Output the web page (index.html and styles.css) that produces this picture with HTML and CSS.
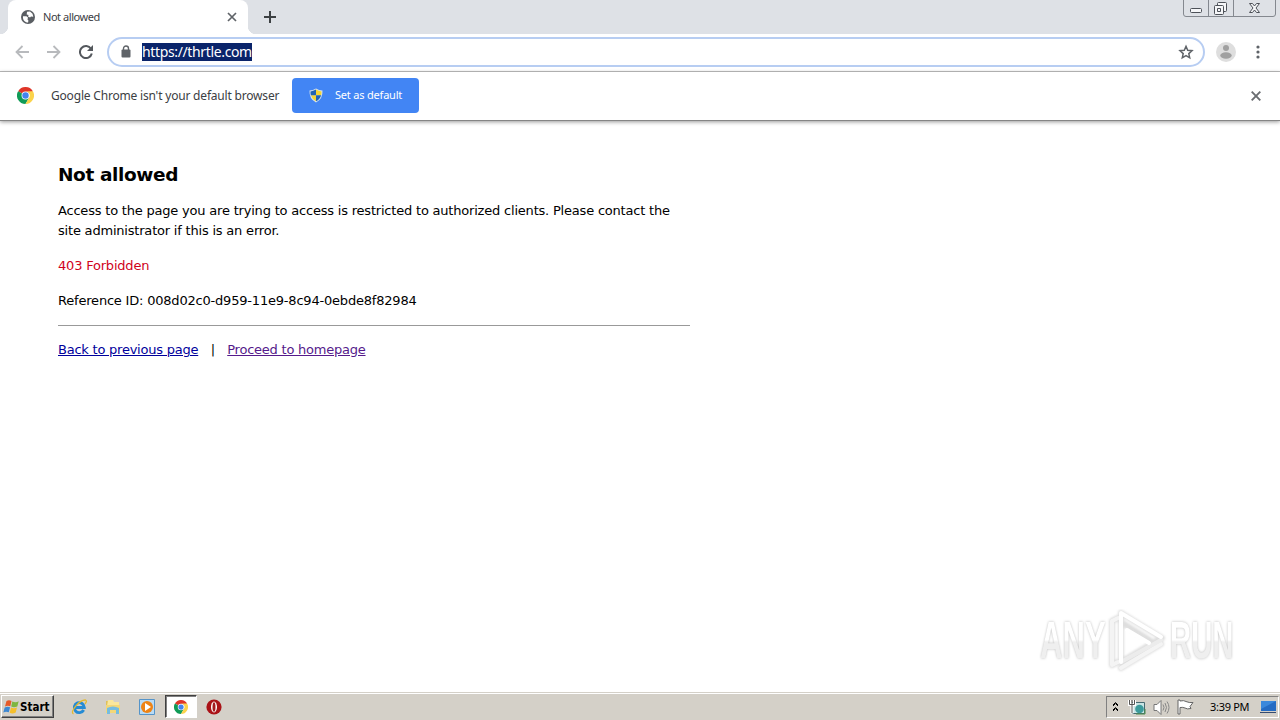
FILE: index.html
```html
<!DOCTYPE html>
<html lang="en">
<head>
<meta charset="utf-8">
<title>Not allowed</title>
<link rel="stylesheet" href="styles.css">
</head>
<body>
<svg width="0" height="0" class="defs">
  <symbol id="chrome" viewBox="0 0 16 16">
    <path d="M8 8 1.070 4A8 8 0 0 1 14.930 4Z" fill="#df3528"/>
    <path d="M8 8 1.070 4A8 8 0 0 0 8 16L11.400 10Z" fill="#109b57"/>
    <path d="M8 4h6.930A8 8 0 0 1 8 16L11.400 10A4 4 0 0 0 8 4Z" fill="#fbd34b"/>
    <circle cx="8" cy="8" r="3.700" fill="#fff"/><circle cx="8" cy="8" r="3" fill="#4384ee"/>
  </symbol>
</svg>
<div class="screen">
  <header class="tabstrip">
    <div class="tab">
      <svg class="globe" width="14" height="14" viewBox="0 0 14 14"><circle cx="7" cy="7" r="7" fill="#5a5e63"/><path d="M2 6.200h3.500l1.600 1.500-.7 1.600 1 1.200-.3 2C4 12.500 1.500 10 2 6.200ZM6 1.700l3-.2 2.500 2.300.8 3-2.300-.4-1 1.100-2-.9.6-1.500-1.900-.7Z" fill="#fff"/></svg>
      <span class="tab-title">Not allowed</span>
      <svg class="tab-close" width="10" height="10" viewBox="0 0 10 10"><path d="m1 1 8 8M9 1 1 9" stroke="#5f6368" stroke-width="1.700"/></svg>
    </div>
    <svg class="plus" width="12" height="12" viewBox="0 0 12 12"><path d="M6 0v12M0 6h12" stroke="#3c4043" stroke-width="2"/></svg>
    <svg class="winbtns" width="95" height="18" viewBox="0 0 95 18"><path d="M.5 0v14q0 2.500 2.500 2.500h87q2.500 0 2.500-2.500V0M25.500 0v16M50.500 0v16" fill="none" stroke="#84888f"/><g fill="#f5f6f8" stroke="#4d5158"><rect x="7.500" y="8.500" width="11" height="4" rx="1"/><rect x="34.500" y="2.500" width="9" height="9" rx="1"/><rect x="31.500" y="5.500" width="9" height="9" rx="1"/><path d="M34.500 8.500h3v3h-3z"/><path d="M66.500 3.500h3l2 2.500 2-2.500h3l-3.500 4.500 3.500 4.500h-3l-2-2.500-2 2.500h-3L70 8Z"/></g></svg>
  </header>
  <nav class="toolbar">
    <svg width="14" height="14" viewBox="0 0 14 14" class="back"><path d="M14 7H1.500M7.500 1l-6 6 6 6" fill="none" stroke="#b8babd" stroke-width="1.800"/></svg>
    <svg width="14" height="14" viewBox="0 0 14 14" class="fwd"><path d="M0 7h12.500M6.500 1l6 6-6 6" fill="none" stroke="#b8babd" stroke-width="1.800"/></svg>
    <svg width="14" height="14" viewBox="0 0 14 14" class="reload"><path d="M12 3.800A6 6 0 1 0 12.800 8.500" fill="none" stroke="#54585d" stroke-width="2"/><path d="M14 0v6H8Z" fill="#54585d"/></svg>
    <div class="omnibox">
      <svg class="lock" width="10" height="13" viewBox="0 0 10 13"><path d="M2.500 5V3.500a2.500 2.500 0 0 1 5 0V5" fill="none" stroke="#5f6368" stroke-width="1.400"/><rect x=".5" y="4.500" width="9" height="8" rx="1" fill="#5f6368"/></svg>
      <span class="url">https://thrtle.com</span>
      <svg class="star" width="16" height="16" viewBox="0 0 16 16"><path d="m8 2.300 1.700 4 4.300.4-3.200 2.900.9 4.200L8 11.600l-3.700 2.200.9-4.200L2 6.700l4.300-.4Z" fill="none" stroke="#5f6368" stroke-width="1.500"/></svg>
    </div>
    <svg class="avatar" width="20" height="20" viewBox="0 0 20 20"><circle cx="10" cy="10" r="10" fill="#dedede"/><circle cx="10" cy="6" r="3" fill="#a0a0a0"/><ellipse cx="10" cy="13.500" rx="5.700" ry="3.200" fill="#a0a0a0"/></svg>
    <svg class="dots" width="4" height="14" viewBox="0 0 4 14" fill="#5f6368"><circle cx="2" cy="2" r="1.600"/><circle cx="2" cy="7" r="1.600"/><circle cx="2" cy="12" r="1.600"/></svg>
  </nav>
  <section class="infobar">
    <svg class="logo" width="17" height="17"><use href="#chrome"/></svg>
    <span class="info-text">Google Chrome isn't your default browser</span>
    <div class="default-btn">
      <svg width="14" height="15" viewBox="0 0 14 15"><path d="M7 .5Q10 2.500 13.500 2.500 14 11 7 14.500 0 11 .5 2.500 4 2.500 7 .5Z" fill="#d5e3ef"/><path d="M7 1.600Q9.500 3.300 12.500 3.400 12.500 5.500 12.100 7.300H7ZM7 7.300V13.300Q3 11 1.900 7.300Z" fill="#f5d534"/><path d="M7 1.600Q4 3.300 1.500 3.400 1.400 5.500 1.900 7.300H7ZM7 7.300h5.100Q11 11.300 7 13.300Z" fill="#2163b5"/></svg>
      <span class="btn-text">Set as default</span>
    </div>
    <svg class="info-close" width="10" height="10" viewBox="0 0 10 10"><path d="m.7.700 8.600 8.600M9.300.700.700 9.300" stroke="#6a6d71" stroke-width="1.900"/></svg>
  </section>
  <main class="page">
    <div class="content">
      <h1>Not allowed</h1>
      <p><span>Access to the page you are trying to access is restricted to authorized clients. Please contact the</span><br><span>site administrator if this is an error.</span></p>
      <p class="error">403 Forbidden</p>
      <p>Reference ID: 008d02c0-d959-11e9-8c94-0ebde8f82984</p>
      <hr>
      <div class="links"><a class="prev">Back to previous page</a><span class="bar">|</span><a class="home">Proceed to homepage</a></div>
    </div>
    <div class="watermark">
      <span class="wm any">ANY</span>
      <svg width="60" height="64" viewBox="0 0 60 64"><g fill="none" stroke-linejoin="round" stroke-linecap="round"><g class="wm-shadow" stroke="#dedede" stroke-width="6"><path d="M11 9 5 12V56l6-3M14 59 54 35"/><path d="M14 53V4L55 29M14 53 54 29M14 13 44 32"/></g><path d="M11 9 5 12V56l6-3M14 59 54 35" stroke="#f4f4f4" stroke-width="4"/><path d="M14 53 54 31" stroke="#ececec" stroke-width="4"/><path d="M14 53V4L54 28M20 21 42 34" stroke="#fff" stroke-width="4"/></g></svg>
      <span class="wm run">RUN</span>
    </div>
  </main>
  <footer class="taskbar">
    <div class="start">
      <svg width="17" height="16" viewBox="0 0 17 16"><path d="M3.500 2Q6 .5 8.500 2L7.300 7.200Q4.500 6 2 7.500Z" fill="#e65a28"/><path d="M9.300 2.400Q12.500 4 15.700 2.300L14.300 7.500Q11 9 8.200 7.600Z" fill="#7eb640"/><path d="M1.700 8.400Q4.500 7 7.100 8.200L5.800 13.300Q3 12 .3 13.500Z" fill="#3d88d2"/><path d="M8 8.600Q11 10 14 8.500L12.700 13.500Q9.500 15.500 6.700 13.800Z" fill="#f5bf2c"/></svg>
      <span class="start-text">Start</span>
    </div>
    <svg class="ie" width="17" height="16" viewBox="0 0 17 16"><path d="M12.700 11A5 5 0 1 1 13.300 8.500H4" fill="none" stroke="#258bd4" stroke-width="2.900"/><path d="M2.500 15C-2 13 9 .5 14.500 1q2 .8-.5 4" fill="none" stroke="#e4b92f" stroke-width="1.300"/></svg>
    <svg class="folder" width="16" height="16" viewBox="0 0 16 16"><path d="M1 2h5l1 2h7v10H1Z" fill="#dfc05a"/><path d="M3 1h5l1 2h5v4H2Z" fill="#fae79b"/><path d="M1 6h14v8H1Z" fill="#f3d777"/><path d="M2 15V9q6-3 12 0v6h-3v-4H5v4Z" fill="#75bce0"/></svg>
    <svg class="media" width="16" height="16" viewBox="0 0 16 16"><path d="M.5.500h15v15H.5Z" fill="#b9dbf5" stroke="#5594c9"/><circle cx="8" cy="8" r="6" fill="#ee8315"/><path d="m6 4 6 4-6 4Z" fill="#fff"/></svg>
    <div class="task"><svg width="14" height="14"><use href="#chrome"/></svg></div>
    <svg class="opera" width="16" height="16" viewBox="0 0 16 16"><circle cx="8" cy="8" r="7.600" fill="#aa1217"/><ellipse cx="8" cy="8" rx="3" ry="5.400" fill="#fff"/><ellipse cx="8" cy="8" rx="1.500" ry="4.700" fill="#a3191d"/></svg>
    <div class="tray">
      <svg class="tray-icons" width="90" height="20" viewBox="0 0 90 20"><path d="m6 8 2.500-2.500L11 8M6 13l2.500-2.500L11 13M6 9l2.500-2.500L11 9M6 14l2.500-2.500L11 14" fill="none" stroke="#000"/>
      <path d="M25.500 5.500h12v11h-12Z" fill="#c9e5e5" stroke="#476a72"/><circle cx="32.500" cy="12" r="4.300" fill="#3c9b9c"/><path d="M22.500 3v4.500h5V3M25 7.500v9" fill="none" stroke="#fff" stroke-width="3"/><path d="M22.500 3v4.500h5V3M25 3v13" fill="none" stroke="#555"/><path d="M29 17h9v-5" stroke="#4d8d4c" fill="none"/>
      <path d="M47 7.500h3l4-4v14l-4-4h-3Z" fill="#fff" stroke="#777"/><path d="M56 7.500q2 3 0 6M58 6q3 4.500 0 9M60 4.500q4 6 0 12" fill="none" stroke="#888"/>
      <path d="M71 17V3h2v1q4-1 6 .5 3 1.500 7 1l-3 4 1 2q-4 1-6-.5-2-1-5-.5V17Z" fill="#fff" stroke="#666"/></svg>
      <span class="clock">3:39 PM</span>
      <svg class="desktop" width="17" height="16" viewBox="0 0 17 16"><path d="M1 2h15v10H1Z" fill="#246bc3"/><path d="M1 2h15L1 10Z" fill="#3b88db"/><path d="M0 13h16v1H0Z" fill="#344b70"/></svg>
    </div>
  </footer>
</div>
</body>
</html>
```
FILE: styles.css
```css
*{box-sizing:border-box}
body{margin:0;background:#fff;font-family:"DejaVu Sans Condensed","DejaVu Sans",sans-serif;color:#000}
svg{display:block;flex:none}
span,a{white-space:nowrap}
.defs{position:absolute}
.screen{width:1280px;height:720px;display:flex;flex-direction:column;overflow:hidden}
.tabstrip{height:34px;background:#dee1e6;display:flex;align-items:flex-start;flex:none}
.tab{width:240px;height:34px;margin-left:8px;background:#fff;border-radius:8px 8px 0 0;display:flex;align-items:center;padding:0 11px 0 13px;position:relative}
.tab::before,.tab::after{content:"";position:absolute;bottom:0;width:8px;height:8px}
.tab::before{left:-8px;background:radial-gradient(circle at 0 0,#dee1e6 8px,#fff 8.500px)}
.tab::after{right:-8px;background:radial-gradient(circle at 100% 0,#dee1e6 8px,#fff 8.500px)}
.tab-title{margin-left:8px;font-family:"Noto Sans",sans-serif;font-size:11px;line-height:16px;letter-spacing:-.45px;color:#3c4043;padding-bottom:1px}
.tab-close{margin-left:auto}
.plus{margin:11px 0 0 16px}
.winbtns{margin-left:auto;margin-right:2px}
.toolbar{height:38px;border-bottom:1px solid #b6b6b6;display:flex;align-items:center;padding:0 20px 2px 15px;flex:none}
.fwd{margin-left:18px}
.reload{margin-left:18px}
.omnibox{margin-left:14px;width:1098px;height:30px;border:2px solid #b7cdf2;border-radius:15px;display:flex;align-items:center;padding:0 9px 0 12px}
.url{margin-left:11px;background:#0a246a;color:#fff;font-family:"Noto Sans",sans-serif;font-size:14px;line-height:18px;height:18px;letter-spacing:-.36px}
.star{margin-left:auto}
.avatar{margin-left:11px}
.dots{margin-left:auto}
.infobar{height:49px;border-bottom:1px solid #858585;display:flex;align-items:center;padding:0 19px 1px 17px;box-shadow:0 1px 4px #999;flex:none}
.info-text{margin-left:17px;width:241px;padding-bottom:1px;font-family:"Noto Sans",sans-serif;font-size:12px;letter-spacing:-.19px;color:#3c4043}
.default-btn{width:127px;height:35px;border-radius:4px;background:#4285f4;display:flex;align-items:center;padding-left:17px;gap:12px;color:#fff;font-family:"Noto Sans",sans-serif;font-size:11px;letter-spacing:-.2px}
.btn-text{padding-bottom:2px}
.info-close{margin-left:auto}
.page{flex:1;display:flex;justify-content:space-between;align-items:flex-end;padding-right:46px}
.content{align-self:flex-start;width:632px;margin-left:58px;padding-top:41px;font-family:"DejaVu Sans",sans-serif;font-size:13px;line-height:20px;letter-spacing:-.2px}
h1{margin:0 0 14px;font-size:18.500px;line-height:25px;letter-spacing:-.38px}
p{margin:0 0 15px;height:20px}
p:nth-of-type(1){height:40px}
.error{color:#d0021b}
hr{height:1px;border:0;background:#999;margin:-1px 0 14px}
.links{display:flex}
a{text-decoration:underline;letter-spacing:-.23px}
.prev{color:#00009c}
.home{color:#551a8b}
.bar{width:29px;text-align:center}
.watermark{display:flex;align-items:center;height:68px;margin-bottom:17px}
.wm{font:700 51px/54px "Liberation Sans",sans-serif;background:linear-gradient(#fff 48%,#efefef 52%);-webkit-background-clip:text;color:transparent;filter:drop-shadow(0 0 1.500px #bdbdbd);transform-origin:left}
.any{width:112px;margin-right:-45px;transform:scaleX(.61)}
.run{width:114px;margin-right:-50px;transform:scaleX(.575)}
.watermark svg{margin-right:3px}
.wm-shadow{filter:blur(1.300px)}
.taskbar{height:28px;background:#d4d0c8;border-top:1px solid #d4d0c8;box-shadow:inset 0 1px #fff;display:flex;align-items:center;flex:none;padding:0 1px}
.start{width:53px;height:23px;display:flex;align-items:center;padding-left:1px;border:1px solid;border-color:#fff #404040 #404040 #fff;box-shadow:inset -1px -1px #808080;font-size:11.500px;font-weight:700}
.ie{margin-left:17px}
.folder{margin-left:17px}
.media{margin-left:18px}
.task{width:32px;height:23px;margin-left:10px;background:#fff;border:1px solid;border-color:#404040 #fff #fff #404040;box-shadow:inset 1px 1px #808080;display:flex;align-items:center;justify-content:center}
.opera{margin-left:9px}
.tray{margin-left:auto;width:173px;height:22px;border:1px solid;border-color:#808080 #fff #fff #808080;display:flex;align-items:center}
.tray-icons{margin-right:13px}
.clock{font:11px "Noto Sans",sans-serif;width:50px;letter-spacing:-.3px}
```
